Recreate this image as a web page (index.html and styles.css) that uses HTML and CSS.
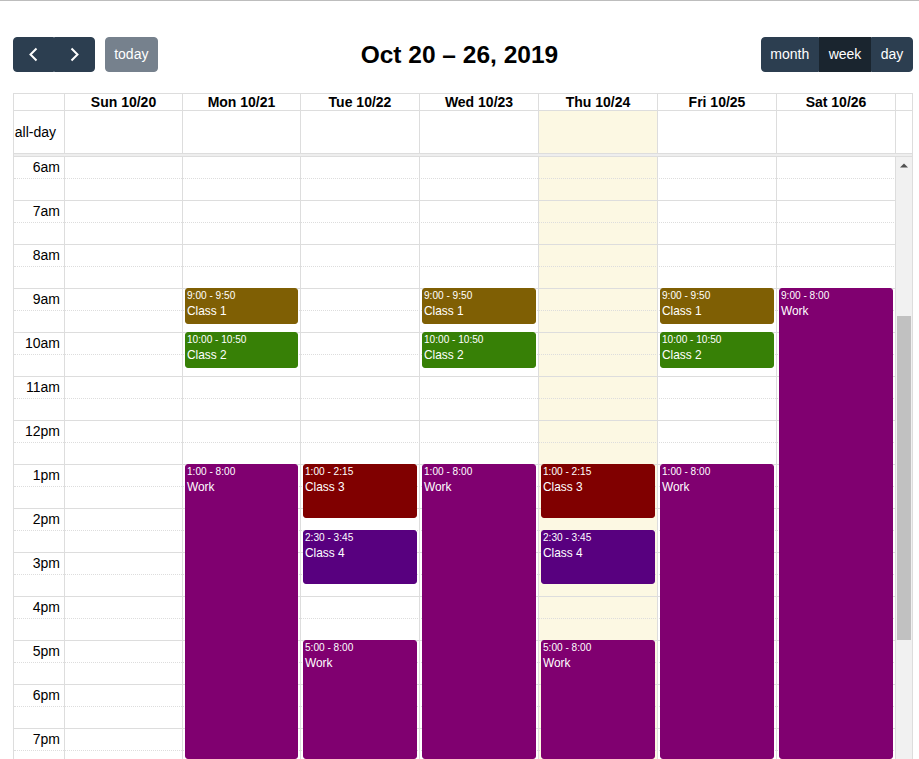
FILE: index.html
```html
<!DOCTYPE html>
<html>
<head>
<meta charset="utf-8">
<title>Calendar</title>
<link rel="stylesheet" href="styles.css">
</head>
<body>
<div class="cal">
  <div class="toolbar">
    <div class="tb-left">
      <div class="btn-group">
        <button class="btn btn-icon" aria-label="prev"><svg width="21" height="21" viewBox="0 0 21 21"><polyline points="13.5,4.5 7.5,10.5 13.5,16.5" fill="none" stroke="#fff" stroke-width="2"/></svg></button>
        <button class="btn btn-icon" aria-label="next"><svg width="21" height="21" viewBox="0 0 21 21"><polyline points="7.5,4.5 13.5,10.5 7.5,16.5" fill="none" stroke="#fff" stroke-width="2"/></svg></button>
      </div>
      <button class="btn btn-today">today</button>
    </div>
    <h2 class="title">Oct 20 – 26, 2019</h2>
    <div class="btn-group">
      <button class="btn">month</button>
      <button class="btn active">week</button>
      <button class="btn">day</button>
    </div>
  </div>

  <div class="view">
    <div class="head-row">
      <div class="hcell axis"></div>
      <div class="hcell">Sun 10/20</div>
      <div class="hcell">Mon 10/21</div>
      <div class="hcell">Tue 10/22</div>
      <div class="hcell">Wed 10/23</div>
      <div class="hcell">Thu 10/24</div>
      <div class="hcell">Fri 10/25</div>
      <div class="hcell">Sat 10/26</div>
      <div class="hcell gutter"></div>
    </div>
    <div class="allday-row">
      <div class="acell axis"><span class="allday-label">all-day</span></div>
      <div class="acell"></div>
      <div class="acell"></div>
      <div class="acell"></div>
      <div class="acell"></div>
      <div class="acell today"></div>
      <div class="acell"></div>
      <div class="acell"></div>
      <div class="acell gutter"></div>
    </div>
    <div class="divider"></div>

    <div class="tg-body">
      <div class="tg-main">
        <div class="bg-layer">
          <div class="bg-cell"></div>
          <div class="bg-cell"></div>
          <div class="bg-cell"></div>
          <div class="bg-cell"></div>
          <div class="bg-cell"></div>
          <div class="bg-cell today"></div>
          <div class="bg-cell"></div>
          <div class="bg-cell"></div>
        </div>

        <div class="slats">
          <div class="slat hour"><span class="slat-label">6am</span></div><div class="slat half"></div>
          <div class="slat hour"><span class="slat-label">7am</span></div><div class="slat half"></div>
          <div class="slat hour"><span class="slat-label">8am</span></div><div class="slat half"></div>
          <div class="slat hour"><span class="slat-label">9am</span></div><div class="slat half"></div>
          <div class="slat hour"><span class="slat-label">10am</span></div><div class="slat half"></div>
          <div class="slat hour"><span class="slat-label">11am</span></div><div class="slat half"></div>
          <div class="slat hour"><span class="slat-label">12pm</span></div><div class="slat half"></div>
          <div class="slat hour"><span class="slat-label">1pm</span></div><div class="slat half"></div>
          <div class="slat hour"><span class="slat-label">2pm</span></div><div class="slat half"></div>
          <div class="slat hour"><span class="slat-label">3pm</span></div><div class="slat half"></div>
          <div class="slat hour"><span class="slat-label">4pm</span></div><div class="slat half"></div>
          <div class="slat hour"><span class="slat-label">5pm</span></div><div class="slat half"></div>
          <div class="slat hour"><span class="slat-label">6pm</span></div><div class="slat half"></div>
          <div class="slat hour"><span class="slat-label">7pm</span></div><div class="slat half"></div>
        </div>

        <div class="ev-layer">
          <div class="ev-axis"></div>
          <div class="ev-col"></div>
          <div class="ev-col">
            <div class="event class1" style="top:131px;height:35.7px"><div class="ev-time">9:00 - 9:50</div><div class="ev-title">Class 1</div></div>
            <div class="event class2" style="top:175px;height:35.7px"><div class="ev-time">10:00 - 10:50</div><div class="ev-title">Class 2</div></div>
            <div class="event work" style="top:307px;height:295px"><div class="ev-time">1:00 - 8:00</div><div class="ev-title">Work</div></div>
          </div>
          <div class="ev-col">
            <div class="event class3" style="top:307px;height:54px"><div class="ev-time">1:00 - 2:15</div><div class="ev-title">Class 3</div></div>
            <div class="event class4" style="top:373px;height:54px"><div class="ev-time">2:30 - 3:45</div><div class="ev-title">Class 4</div></div>
            <div class="event work" style="top:483px;height:119px"><div class="ev-time">5:00 - 8:00</div><div class="ev-title">Work</div></div>
          </div>
          <div class="ev-col">
            <div class="event class1" style="top:131px;height:35.7px"><div class="ev-time">9:00 - 9:50</div><div class="ev-title">Class 1</div></div>
            <div class="event class2" style="top:175px;height:35.7px"><div class="ev-time">10:00 - 10:50</div><div class="ev-title">Class 2</div></div>
            <div class="event work" style="top:307px;height:295px"><div class="ev-time">1:00 - 8:00</div><div class="ev-title">Work</div></div>
          </div>
          <div class="ev-col">
            <div class="event class3" style="top:307px;height:54px"><div class="ev-time">1:00 - 2:15</div><div class="ev-title">Class 3</div></div>
            <div class="event class4" style="top:373px;height:54px"><div class="ev-time">2:30 - 3:45</div><div class="ev-title">Class 4</div></div>
            <div class="event work" style="top:483px;height:119px"><div class="ev-time">5:00 - 8:00</div><div class="ev-title">Work</div></div>
          </div>
          <div class="ev-col">
            <div class="event class1" style="top:131px;height:35.7px"><div class="ev-time">9:00 - 9:50</div><div class="ev-title">Class 1</div></div>
            <div class="event class2" style="top:175px;height:35.7px"><div class="ev-time">10:00 - 10:50</div><div class="ev-title">Class 2</div></div>
            <div class="event work" style="top:307px;height:295px"><div class="ev-time">1:00 - 8:00</div><div class="ev-title">Work</div></div>
          </div>
          <div class="ev-col">
            <div class="event work" style="top:131px;height:471px"><div class="ev-time">9:00 - 8:00</div><div class="ev-title">Work</div></div>
          </div>
        </div>
      </div>

      <div class="sbar">
        <div class="sb-btn"><svg width="8" height="5" viewBox="0 0 8 5"><polygon points="0,4.5 4,0.5 8,4.5" fill="#505050"/></svg></div>
        <div class="sb-gap"></div>
        <div class="sb-thumb"></div>
        <div class="sb-rest"></div>
        <div class="sb-btn"><svg width="8" height="5" viewBox="0 0 8 5"><polygon points="0,0.5 8,0.5 4,4.5" fill="#505050"/></svg></div>
      </div>
    </div>
  </div>
</div>
</body>
</html>
```

FILE: styles.css
```css
html, body {
  margin: 0;
  padding: 0;
  height: 759px;
  overflow: hidden;
}

body {
  box-sizing: border-box;
  border-top: 1px solid #bdbdbd;
  background: #fff;
  color: #000;
  font-family: "Liberation Sans", Arial, Helvetica, sans-serif;
  font-size: 14px;
}

.cal {
  width: 900px;
  margin: 36px 0 0 13px;
}

/* ---------- toolbar ---------- */
.toolbar {
  display: flex;
  justify-content: space-between;
  align-items: center;
  height: 35px;
  margin-bottom: 21px;
}

.tb-left {
  display: flex;
  align-items: center;
}

.btn-group {
  display: flex;
}

.btn {
  display: block;
  box-sizing: border-box;
  height: 35px;
  margin: 0;
  padding: 6px 8.7px;
  border: 1px solid #2c3e50;
  border-radius: 4px;
  background: #2c3e50;
  color: #fff;
  font-family: inherit;
  font-size: 14px;
  line-height: 21px;
  cursor: pointer;
}

.btn-icon {
  padding: 6px 9px;
}

.btn-group .btn {
  border-radius: 0;
}

.btn-group .btn:first-child {
  border-radius: 4px 0 0 4px;
}

.btn-group .btn:last-child {
  border-radius: 0 4px 4px 0;
}

.btn.active {
  background: #1a252f;
  border-color: #1a252f;
}

.btn-icon svg {
  display: block;
}

.btn-today {
  margin-left: 9.5px;
  background: #76818d;
  border-color: #76818d;
}

.title {
  margin: 0;
  font-size: 24.5px;
  font-weight: bold;
  line-height: 30px;
}

/* ---------- view ---------- */
.view {
  border-top: 1px solid #ddd;
  border-left: 1px solid #ddd;
  border-right: 1px solid #ddd;
}

.head-row,
.allday-row {
  display: grid;
  grid-template-columns: 51px 118px 118px repeat(5, 119px) 16px;
}

.bg-layer,
.ev-layer {
  display: grid;
  grid-template-columns: 51px 118px 118px repeat(5, 119px);
}

.hcell {
  border-right: 1px solid #ddd;
  border-bottom: 1px solid #ddd;
  text-align: center;
  font-weight: bold;
  line-height: 16px;
  white-space: nowrap;
}

.hcell.gutter,
.acell.gutter {
  border-right: 0;
}

.acell {
  height: 42px;
  border-right: 1px solid #ddd;
}

.acell.axis {
  display: flex;
  align-items: center;
  justify-content: flex-end;
  padding-right: 8px;
}

.today {
  background: #fcf8e3;
}

.divider {
  height: 2px;
  background: #eee;
  border-top: 1px solid #ddd;
  border-bottom: 1px solid #ddd;
}

/* ---------- time grid ---------- */
.tg-body {
  display: grid;
  grid-template-columns: 1fr 16px;
  height: 602px;
  overflow: hidden;
}

.tg-main {
  display: grid;
  align-items: stretch;
}

.tg-main > * {
  grid-area: 1 / 1;
}

.bg-cell {
  border-right: 1px solid #ddd;
}

.slat {
  box-sizing: border-box;
  height: 22px;
  line-height: 21px;
}

.slat.hour {
  border-bottom: 1px dotted #ddd;
}

.slat.half {
  border-bottom: 1px solid #ddd;
}

.slat-label {
  display: block;
  box-sizing: border-box;
  width: 51px;
  padding-right: 5px;
  text-align: right;
  white-space: nowrap;
}

.ev-col {
  position: relative;
}

.event {
  position: absolute;
  left: 2px;
  right: 3px;
  box-sizing: border-box;
  border: 1px solid;
  border-radius: 3px;
  color: #fff;
  font-size: 11.9px;
  line-height: 1.4;
  overflow: hidden;
}

.ev-time {
  padding: 0 1px;
  font-size: 10.1px;
  white-space: nowrap;
}

.ev-title {
  padding: 0 1px;
}

.class1 { background: #7f5f04; border-color: #7f5f04; }
.class2 { background: #378006; border-color: #378006; }
.class3 { background: #800000; border-color: #800000; }
.class4 { background: #58007f; border-color: #58007f; }
.work   { background: #800070; border-color: #800070; }

/* ---------- scrollbar ---------- */
.sbar {
  display: flex;
  flex-direction: column;
  background: #f1f1f1;
}

.sb-btn {
  height: 17px;
  flex: none;
  display: flex;
  align-items: center;
  justify-content: center;
}

.sb-btn svg {
  display: block;
}

.sb-gap {
  height: 142px;
  flex: none;
}

.sb-thumb {
  height: 324px;
  flex: none;
  margin: 0 1px;
  background: #c1c1c1;
}

.sb-rest {
  flex: 1;
}
```
